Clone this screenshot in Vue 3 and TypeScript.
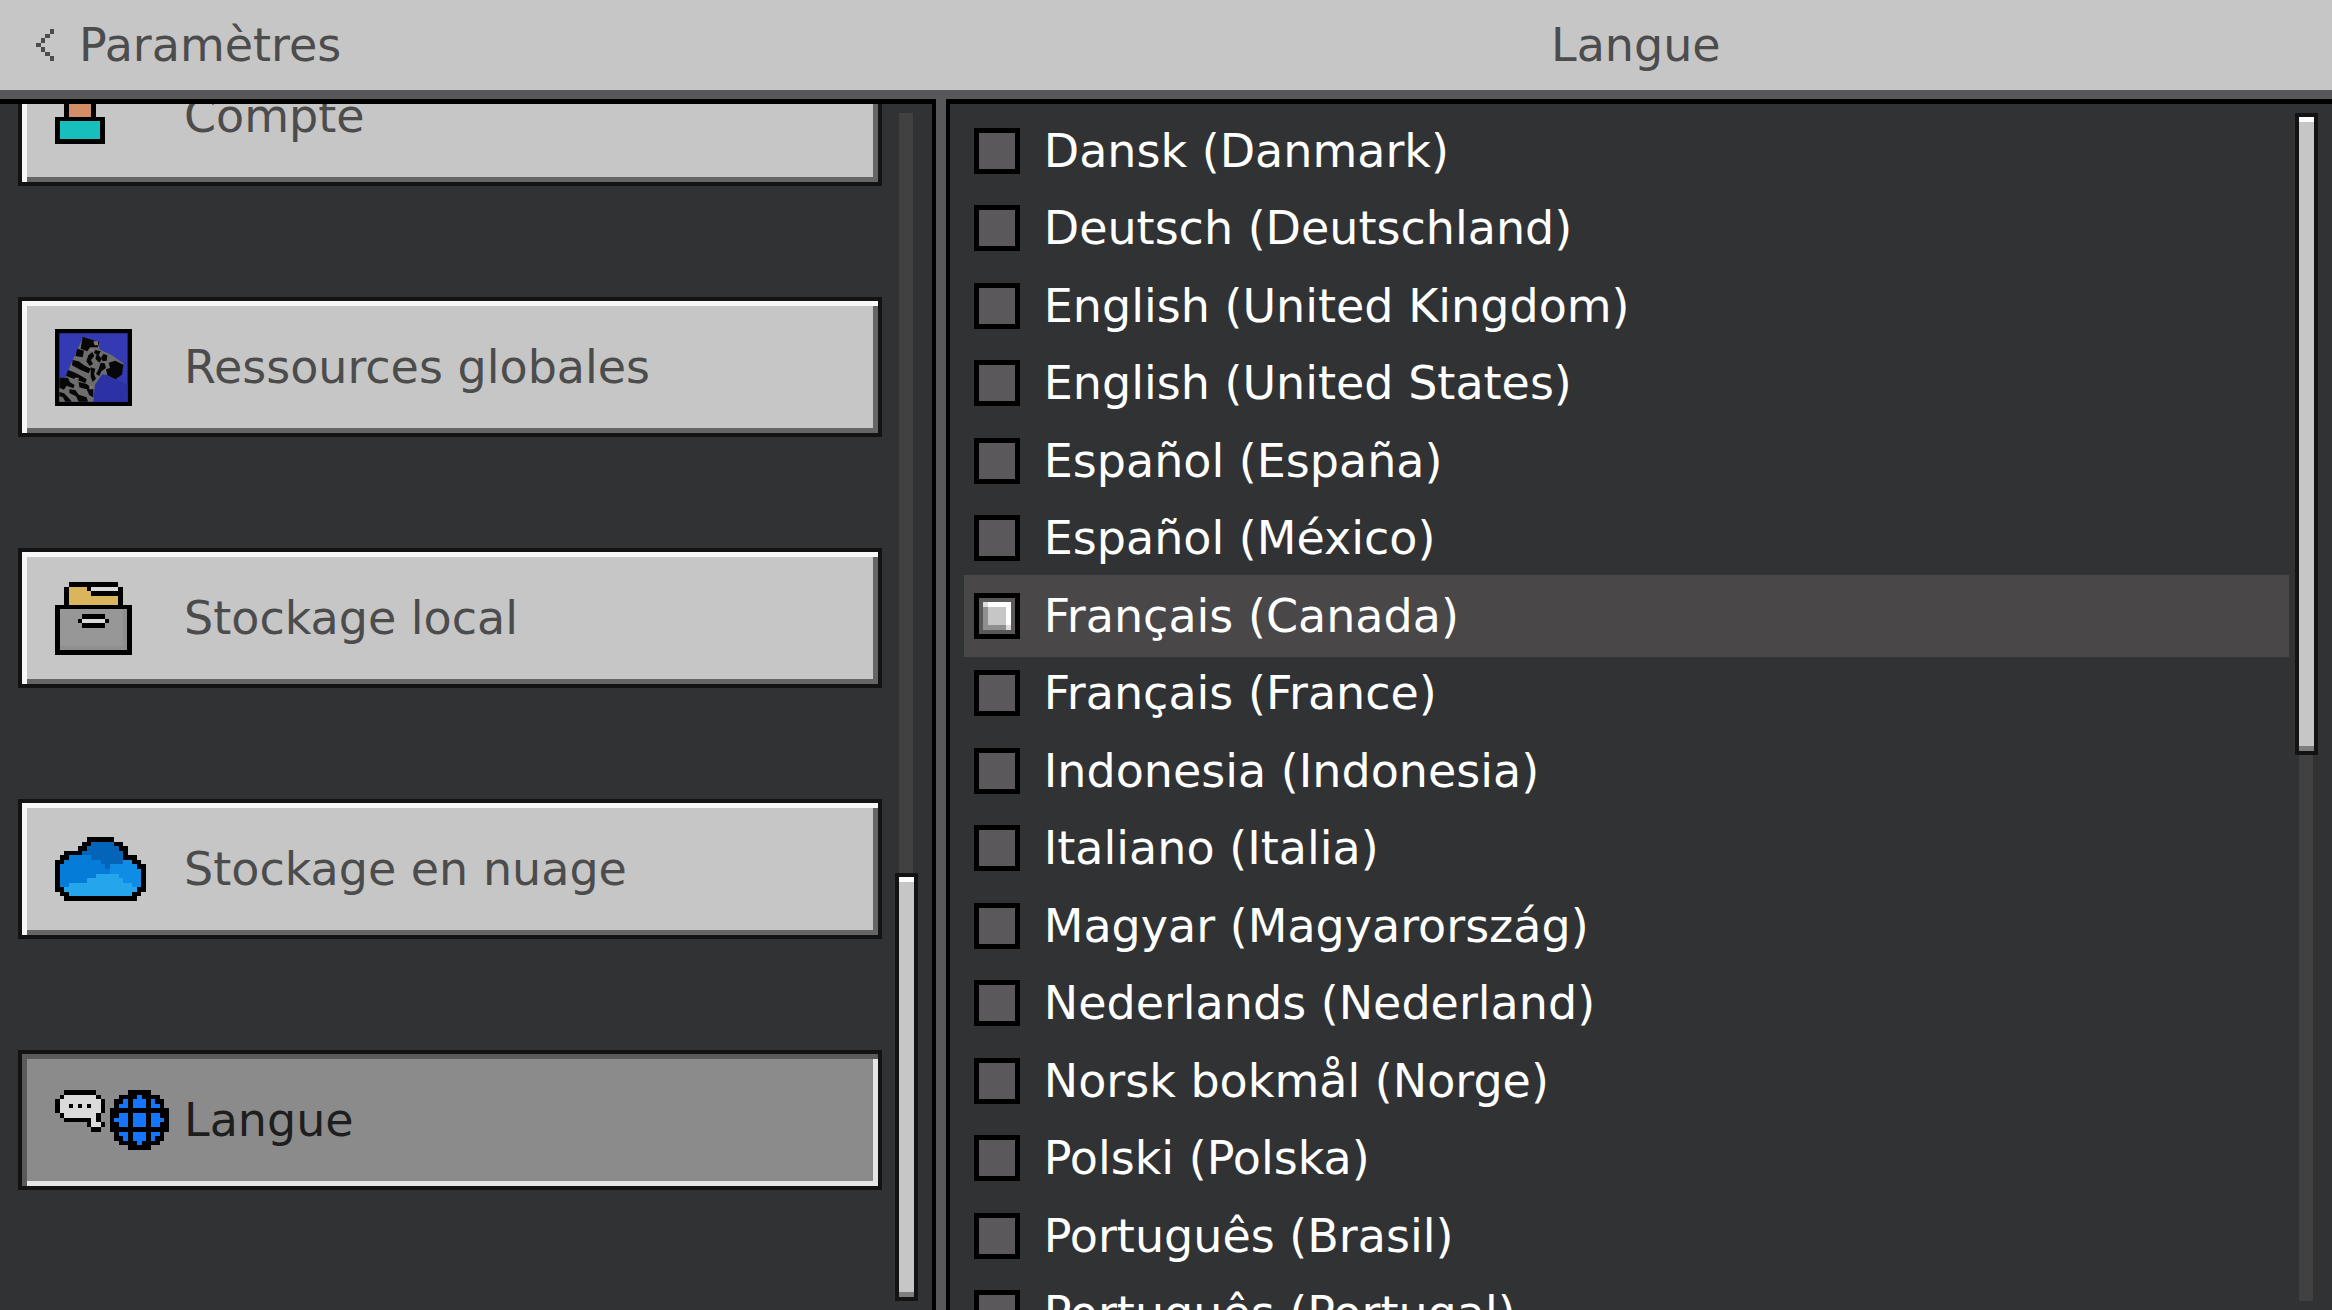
<script setup lang="ts">
import { ref } from 'vue'

interface PixelArt {
  width: number
  height: number
  rows: string[]
}

interface Section {
  id: string
  label: string
  art?: PixelArt
}

interface Run {
  x: number
  y: number
  w: number
  fill: string
}

const palette: Record<string, string> = {
  k: '#000000',
  s: '#d38e68',
  t: '#17bebb',
  y: '#dab55c',
  w: '#dadada',
  g: '#979797',
  h: '#8f8f8f',
  d: '#0464b8',
  m: '#047cd8',
  r: '#0f8de6',
  l: '#25a5ec',
  b: '#1475ff',
}

const account: PixelArt = {
  width: 50,
  height: 55,
  rows: [
    '..kkkkkkk..',
    '..ksssssk..',
    '..ksssssk..',
    '..ksssssk..',
    '..ksssssk..',
    '..ksssssk..',
    'kkkkkkkkkkk',
    'ktttttttttk',
    'ktttttttttk',
    'ktttttttttk',
    'ktttttttttk',
    'kkkkkkkkkkk',
  ],
}

const drawer: PixelArt = {
  width: 77,
  height: 73,
  rows: [
    '...kkkkkkkkkkk...',
    '..kyyyykwwwwwwk..',
    '..kyyyyykkkkkkk..',
    '..kyyyyyyyyyyyk..',
    '..kyyyyyyyyyyyk..',
    'kkkkkkkkkkkkkkkkk',
    'kgggggggggggggghk',
    'kgggggkkkkkgggghk',
    'kggggkwwwwwkggghk',
    'kgggggkkkkkgggghk',
    'kgggggggggggggghk',
    'kgggggggggggggghk',
    'kgggggggggggggghk',
    'kgggggggggggggghk',
    'khhhhhhhhhhhhhhhk',
    'kkkkkkkkkkkkkkkkk',
  ],
}

const cloud: PixelArt = {
  width: 91,
  height: 64,
  rows: [
    '.......kkkkkk.......',
    '......kkdddddkk.....',
    '.....kkdddddddkk....',
    '..kkkkdddddddddk....',
    '.kkmmmmmdddddddkkk..',
    'kkmmmmmmmmdddddrrkk.',
    'kmmmmmmmmmmdrrrrrrkk',
    'kmmmmmmmmmmmrrrrrrrk',
    'kmmmmmmmmlllllrrrrrk',
    'kmmmmmmllllllllrrrrk',
    'kmmllllllllllllllrrk',
    'kkllllllllllllllllkk',
    '.kkllllllllllllllkk.',
    '..kkkkkkkkkkkkkkkk..',
  ],
}

const speech: PixelArt = {
  width: 114,
  height: 60,
  rows: [
    '..kkkkkkk.......kkkkk....',
    '.kwwwwwwwk....kkkkbkkkk..',
    'kwwwwwwwwwk..kkbkbbbkbkk.',
    'kwwkwkwkwwk..kbbkbbbkbbk.',
    'kwwwwwwwwwk.kkkkkkkkkkkkk',
    '.kwwwwwwwk..kkbbkbbbkbbkk',
    '..kkkkkkwk..kbbbkbbbkbbbk',
    '.......kwwk.kkbbkbbbkbbkk',
    '........kk..kkkkkkkkkkkkk',
    '.............kbbkbbbkbbk.',
    '.............kkbkbbbkbkk.',
    '..............kkkkbkkkk..',
    '................kkkkk....',
  ],
}

const sections: Section[] = [
  { id: 'account', label: 'Compte', art: account },
  { id: 'resources', label: 'Ressources globales' },
  { id: 'local', label: 'Stockage local', art: drawer },
  { id: 'cloud', label: 'Stockage en nuage', art: cloud },
  { id: 'language', label: 'Langue', art: speech },
]

const languages: string[] = [
  'Dansk (Danmark)',
  'Deutsch (Deutschland)',
  'English (United Kingdom)',
  'English (United States)',
  'Español (España)',
  'Español (México)',
  'Français (Canada)',
  'Français (France)',
  'Indonesia (Indonesia)',
  'Italiano (Italia)',
  'Magyar (Magyarország)',
  'Nederlands (Nederland)',
  'Norsk bokmål (Norge)',
  'Polski (Polska)',
  'Português (Brasil)',
  'Português (Portugal)',
]

const activeSection = ref('language')
const language = ref('Français (Canada)')

// Joins neighbouring cells of one colour into a single rectangle.
function runs(art: PixelArt): Run[] {
  const out: Run[] = []
  art.rows.forEach((row, y) => {
    let x = 0
    while (x < row.length) {
      let end = x + 1
      while (end < row.length && row[end] === row[x]) end++
      if (row[x] !== '.') out.push({ x, y, w: end - x, fill: palette[row[x]] })
      x = end
    }
  })
  return out
}
</script>

<template>
  <div class="screen">
    <header class="bar">
      <button type="button" class="back">
        <svg class="chevron" viewBox="0 0 4 7" width="18" height="32" preserveAspectRatio="none" shape-rendering="crispEdges" aria-hidden="true">
          <path d="M3 0h1v1h-1zM2 1h1v1h-1zM1 2h1v1h-1zM0 3h1v1h-1zM1 4h1v1h-1zM2 5h1v1h-1zM3 6h1v1h-1z" fill="#4c4c4c" />
        </svg>
        <span>Paramètres</span>
      </button>
      <h1 class="title">Langue</h1>
    </header>

    <main class="panes">
      <nav class="pane side">
        <div class="sections">
          <button
            v-for="s in sections"
            :key="s.id"
            type="button"
            class="section"
            :class="{ active: s.id === activeSection }"
            @click="activeSection = s.id"
          >
            <span class="icon">
              <svg
                v-if="s.art"
                :width="s.art.width"
                :height="s.art.height"
                :viewBox="`0 0 ${s.art.rows[0].length} ${s.art.rows.length}`"
                preserveAspectRatio="none"
                shape-rendering="crispEdges"
                aria-hidden="true"
              >
                <rect v-for="(r, i) in runs(s.art)" :key="i" :x="r.x" :y="r.y" :width="r.w" height="1" :fill="r.fill" />
              </svg>
              <svg v-else width="77" height="77" viewBox="45 57 231 231" aria-hidden="true">
                <path d="M45 57h231v231H45z" fill="#000" />
                <path d="M58 70h205v205H58z" fill="#3439b4" />
                <path d="M163 200l40-6 60 30v51H160z" fill="#2c31a4" />
                <path d="M130 80l48 16v22l38 18 34 24-5 34-20 14-24-12-14-4-22 32-5 51H58v-72h18l18-44 20-44z" fill="#6d6d6d" />
                <path
                  d="M128 80l50 16-4 16-24 0-8 12-20-8zM112 116l20 6-4 20-22-4zM98 150l18 4 16 12 20 10-6 14-24-10-26-14zM84 180l22 8 22 12 12 8-4 12-24-10-34-12zM58 203h26l6 14 14 8-4 10-20-8-8 12-14-6zM58 246l14 4 12 12 12 13H76l-8-14-10-2zM88 238l18 2 10 14 24 8 4 13h-28l-8-16-20-10zM116 216l24 6 20 16v24l-12-6-8-18-22-6zM145 136l12-10 6 12-10 12 6 12-10 6-10-14zM166 120l16 4-6 12 10 10-8 12-12-12 4-12-8-6zM190 132l12 4-2 16-12 2-4-12zM182 158l12 2 4 14-14 10-6 14-10-6 8-14zM152 172l14 4-4 16 6 14-10 10-6-16zM206 158l20-6 24 12-4 30-20 14-24-12-4-18 12-4z"
                  fill="#070707"
                />
                <path d="M160 94h14v12h-10zM150 116h10v6h-10zM104 203h12v6h-12zM148 228h10v10h-10z" fill="#8a7874" />
              </svg>
            </span>
            <span class="label">{{ s.label }}</span>
          </button>
        </div>
        <div class="track">
          <div class="thumb low"></div>
        </div>
      </nav>

      <div class="divider"></div>

      <section class="pane content">
        <div class="languages" role="radiogroup" aria-label="Langue">
          <label
            v-for="name in languages"
            :key="name"
            class="language"
            :class="{ chosen: name === language }"
          >
            <input v-model="language" type="radio" name="language" :value="name" />
            <span>{{ name }}</span>
          </label>
        </div>
        <div class="track">
          <div class="thumb high"></div>
        </div>
      </section>
    </main>
  </div>
</template>

<style>
body {
  background: #313233;
}
</style>

<style scoped>
* {
  box-sizing: border-box;
}

.screen {
  display: flex;
  flex-direction: column;
  height: 100vh;
  overflow: hidden;
  background: #313233;
  font-family: "DejaVu Sans", sans-serif;
  font-size: 46px;
  line-height: 54px;
  color: #ffffff;
}

button {
  font: inherit;
  text-align: left;
  cursor: pointer;
}

.bar,
.panes {
  display: grid;
  grid-template-columns: minmax(0, 27fr) 10px minmax(0, 40fr);
}

.bar {
  flex: none;
  height: 99px;
  align-items: center;
  background: #c6c6c6;
  border-bottom: 9px solid #58585a;
  color: #4c4c4c;
}

.back {
  display: flex;
  align-items: center;
  gap: 25px;
  padding: 0 36px;
  border: 0;
  background: none;
  color: inherit;
}

.chevron {
  flex: none;
}

.title {
  grid-column: 3;
  margin: 0;
  padding-right: 6px;
  font-size: inherit;
  font-weight: 400;
  text-align: center;
}

.panes {
  flex: 1;
  min-height: 0;
}

.pane {
  display: flex;
  min-height: 0;
  overflow: hidden;
  border-top: 5px solid #000000;
}

.side {
  border-right: 4px solid #000000;
  padding: 0 14px 0 18px;
  gap: 13px;
}

.divider {
  background: #58585a;
}

.content {
  border-left: 4px solid #000000;
  padding: 0 14px;
  gap: 6px;
}

.sections {
  flex: 1;
  min-width: 0;
  display: flex;
  flex-direction: column;
  gap: 111px;
  margin-top: -58px;
}

.section {
  flex: none;
  display: flex;
  align-items: center;
  height: 140px;
  padding: 0 33px;
  border: 4px solid #131313;
  background: #c6c6c6;
  box-shadow: inset 5px 5px #f7f7f7, inset -5px -5px #656565;
  color: #4c4c4c;
}

.section.active {
  background: #8b8b8b;
  box-shadow: inset 5px 5px #5a5a5a, inset -5px -5px #e6e6e6;
  color: #1e1e1f;
}

.icon {
  flex: none;
  display: flex;
  align-items: center;
  width: 129px;
}

.track {
  flex: none;
  display: flex;
  flex-direction: column;
  width: 23px;
  margin: 9px 0;
  background: linear-gradient(#414142, #414142) center / 14px 100% no-repeat;
}

.thumb {
  border: 4px solid #131313;
  background: #c6c6c6;
  box-shadow: inset 0 5px #ffffff, inset 0 -5px #7e7e7e;
}

.low {
  height: 36%;
  margin-top: auto;
}

.high {
  height: 54%;
}

.languages {
  flex: 1;
  min-width: 0;
  display: flex;
  flex-direction: column;
  padding-top: 6px;
}

.language {
  flex: none;
  display: flex;
  align-items: center;
  gap: 24px;
  height: 82px;
  margin-bottom: -5px;
  padding: 0 10px;
  cursor: pointer;
}

.language:nth-child(even) {
  margin-bottom: -4px;
}

.chosen {
  background: #4a4749;
}

.language input {
  appearance: none;
  flex: none;
  display: grid;
  place-items: center;
  width: 46px;
  height: 46px;
  margin: 0;
  border: 5px solid #000000;
  background: #5a585a;
}

.language input:checked::before {
  content: "";
  width: 28px;
  height: 28px;
  background:
    linear-gradient(#dcdcdc, #dcdcdc) left top / 5px 5px no-repeat,
    linear-gradient(#dcdcdc, #dcdcdc) right bottom / 5px 5px no-repeat,
    linear-gradient(#ffffff, #ffffff) left top / 100% 5px no-repeat,
    linear-gradient(#ffffff, #ffffff) right top / 5px 100% no-repeat,
    linear-gradient(#8f8f8f, #8f8f8f) left top / 5px 100% no-repeat,
    linear-gradient(#8f8f8f, #8f8f8f) left bottom / 100% 5px no-repeat,
    #c6c6c6;
}
</style>
